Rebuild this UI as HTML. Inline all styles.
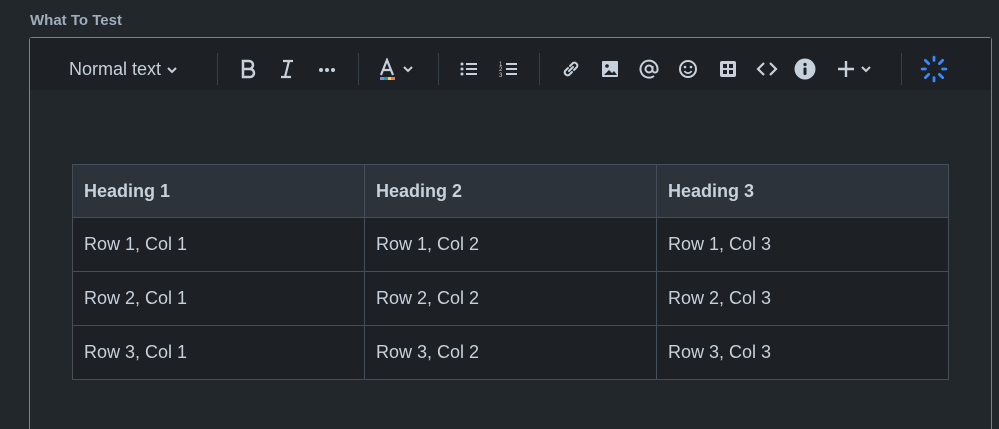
<!DOCTYPE html>
<html><head><meta charset="utf-8"><style>
*{margin:0;padding:0;box-sizing:border-box}
html,body{width:999px;height:429px;overflow:hidden}
body{background:#22272b;font-family:"Liberation Sans",sans-serif;position:relative;color:#b6c2cf}
.lbl{position:absolute;left:30px;top:12px;font-size:15px;font-weight:bold;color:#9fadbc}
.ed{position:absolute;left:29px;top:37px;width:963px;height:392px;border:1px solid #738496;border-bottom:none;border-radius:3px 3px 0 0;background:#22272b}
.tb{position:absolute;left:0;top:0;right:0;height:52px;background:#1d2125}
.sep{position:absolute;top:15px;width:1px;height:32px;background:#38414a}
.ic{position:absolute;top:20px}
.nt{position:absolute;left:39px;top:21px;font-size:18px;color:#c7d1db}
table{position:absolute;left:42px;top:126px;border-collapse:collapse;width:877px;font-size:18px}
td,th{border:1px solid #454f59;height:54px;padding:0 11px;text-align:left;color:#c7d1db;width:292px}
th{background:#2c333a;font-weight:bold;height:53px}
td{background:#1d2125}
</style></head><body>
<div class="lbl">What To Test</div>
<div class="ed">
<div class="tb">
<div class="nt">Normal text <svg width="12" height="10" viewBox="0 0 12 10"><path d="M2 3l4 4 4-4" stroke="#c7d1db" stroke-width="2" fill="none"/></svg></div>
<div class="sep" style="left:187px"></div>
<div class="sep" style="left:328px"></div>
<div class="sep" style="left:408px"></div>
<div class="sep" style="left:509px"></div>
<div class="sep" style="left:871px"></div>
<svg class="ic" style="left:209px" width="20" height="22" viewBox="0 0 20 22"><path d="M4 3h6a4 4 0 010 8H4zM4 11h7a4 4 0 010 8H4z" stroke="#c7d1db" stroke-width="2.5" fill="none"/></svg>
<svg class="ic" style="left:248px" width="18" height="22" viewBox="0 0 18 22"><path d="M5 3h10M3 19h10M11 3L7 19" stroke="#c7d1db" stroke-width="2.2" fill="none"/></svg>
<svg class="ic" style="left:288px" width="20" height="22" viewBox="0 0 20 22"><circle cx="3" cy="12" r="2" fill="#c7d1db"/><circle cx="9" cy="12" r="2" fill="#c7d1db"/><circle cx="15" cy="12" r="2" fill="#c7d1db"/></svg>
<svg class="ic" style="left:348px" width="40" height="24" viewBox="0 0 40 24"><path d="M3 17L9 2l6 15M5 12h8" stroke="#c7d1db" stroke-width="2.2" fill="none"/><rect x="2" y="19" width="4" height="3" fill="#8f7ee7"/><rect x="6" y="19" width="4" height="3" fill="#1d9aaa"/><rect x="10" y="19" width="3" height="3" fill="#f5cd47"/><rect x="13" y="19" width="4" height="3" fill="#f87168"/><path d="M26 9l4 4 4-4" stroke="#c7d1db" stroke-width="2" fill="none"/></svg>
<svg class="ic" style="left:429px" width="20" height="22" viewBox="0 0 20 22"><circle cx="3" cy="6" r="1.5" fill="#c7d1db"/><circle cx="3" cy="11" r="1.5" fill="#c7d1db"/><circle cx="3" cy="16" r="1.5" fill="#c7d1db"/><path d="M7 6h11M7 11h11M7 16h11" stroke="#c7d1db" stroke-width="2"/></svg>
<svg class="ic" style="left:469px" width="20" height="22" viewBox="0 0 20 22"><path d="M7 6h11M7 11h11M7 16h11" stroke="#c7d1db" stroke-width="2"/><text x="0" y="8" font-size="6" fill="#c7d1db" font-family="Liberation Sans">1</text><text x="0" y="13" font-size="6" fill="#c7d1db" font-family="Liberation Sans">2</text><text x="0" y="19" font-size="6" fill="#c7d1db" font-family="Liberation Sans">3</text></svg>
<svg class="ic" style="left:530px" width="22" height="22" viewBox="0 0 22 22"><path d="M9 13l4-4M8 10l-3 3a3 3 0 004 4l3-3M14 12l3-3a3 3 0 00-4-4l-3 3" stroke="#c7d1db" stroke-width="2" fill="none" stroke-linecap="round"/></svg>
<svg class="ic" style="left:570px" width="20" height="22" viewBox="0 0 20 22"><rect x="2" y="3" width="16" height="16" rx="1" fill="#c7d1db"/><circle cx="7" cy="8" r="1.8" fill="#1d2125"/><path d="M4 17l5-5 3 3 2-2 3 4z" fill="#1d2125"/></svg>
<svg class="ic" style="left:608px" width="22" height="22" viewBox="0 0 22 22"><circle cx="11" cy="11" r="3.5" stroke="#c7d1db" stroke-width="2" fill="none"/><path d="M14.5 8v4a2.5 2.5 0 005 0V11a8.5 8.5 0 10-3.5 7" stroke="#c7d1db" stroke-width="2" fill="none"/></svg>
<svg class="ic" style="left:647px" width="22" height="22" viewBox="0 0 22 22"><circle cx="11" cy="11" r="8" stroke="#c7d1db" stroke-width="2" fill="none"/><circle cx="8" cy="9" r="1.3" fill="#c7d1db"/><circle cx="14" cy="9" r="1.3" fill="#c7d1db"/><path d="M7.5 13a4 4 0 007 0" stroke="#c7d1db" stroke-width="1.8" fill="none"/></svg>
<svg class="ic" style="left:688px" width="20" height="22" viewBox="0 0 20 22"><rect x="2" y="3" width="16" height="16" rx="2" fill="#c7d1db"/><rect x="5" y="6" width="4" height="4" fill="#1d2125"/><rect x="11" y="6" width="4" height="4" fill="#1d2125"/><rect x="5" y="12" width="4" height="4" fill="#1d2125"/><rect x="11" y="12" width="4" height="4" fill="#1d2125"/></svg>
<svg class="ic" style="left:725px" width="24" height="22" viewBox="0 0 24 22"><path d="M9 5l-6 6 6 6M15 5l6 6-6 6" stroke="#c7d1db" stroke-width="2.2" fill="none"/></svg>
<svg class="ic" style="left:764px" width="22" height="22" viewBox="0 0 22 22"><circle cx="11" cy="11" r="10.5" fill="#c7d1db"/><circle cx="11" cy="6.5" r="1.6" fill="#1d2125"/><rect x="9.5" y="9.5" width="3" height="7.5" rx="1" fill="#1d2125"/></svg>
<svg class="ic" style="left:806px" width="40" height="22" viewBox="0 0 40 22"><path d="M10 3v16M2 11h16" stroke="#c7d1db" stroke-width="2.4"/><path d="M26 9l4 4 4-4" stroke="#c7d1db" stroke-width="2" fill="none"/></svg>
<svg class="ic" style="left:890px;top:17px" width="28" height="28" viewBox="0 0 26 26"><g stroke="#388bff" stroke-width="2.6" stroke-linecap="round"><path d="M13 2v3M13 21v3M2 13h3M21 13h3M5 5l3 3M18 18l3 3M21 5l-3 3M5 21l3-3"/></g></svg>
</div>
<table>
<tr><th>Heading 1</th><th>Heading 2</th><th>Heading 3</th></tr>
<tr><td>Row 1, Col 1</td><td>Row 1, Col 2</td><td>Row 1, Col 3</td></tr>
<tr><td>Row 2, Col 1</td><td>Row 2, Col 2</td><td>Row 2, Col 3</td></tr>
<tr><td>Row 3, Col 1</td><td>Row 3, Col 2</td><td>Row 3, Col 3</td></tr>
</table>
</div>
</body></html>
